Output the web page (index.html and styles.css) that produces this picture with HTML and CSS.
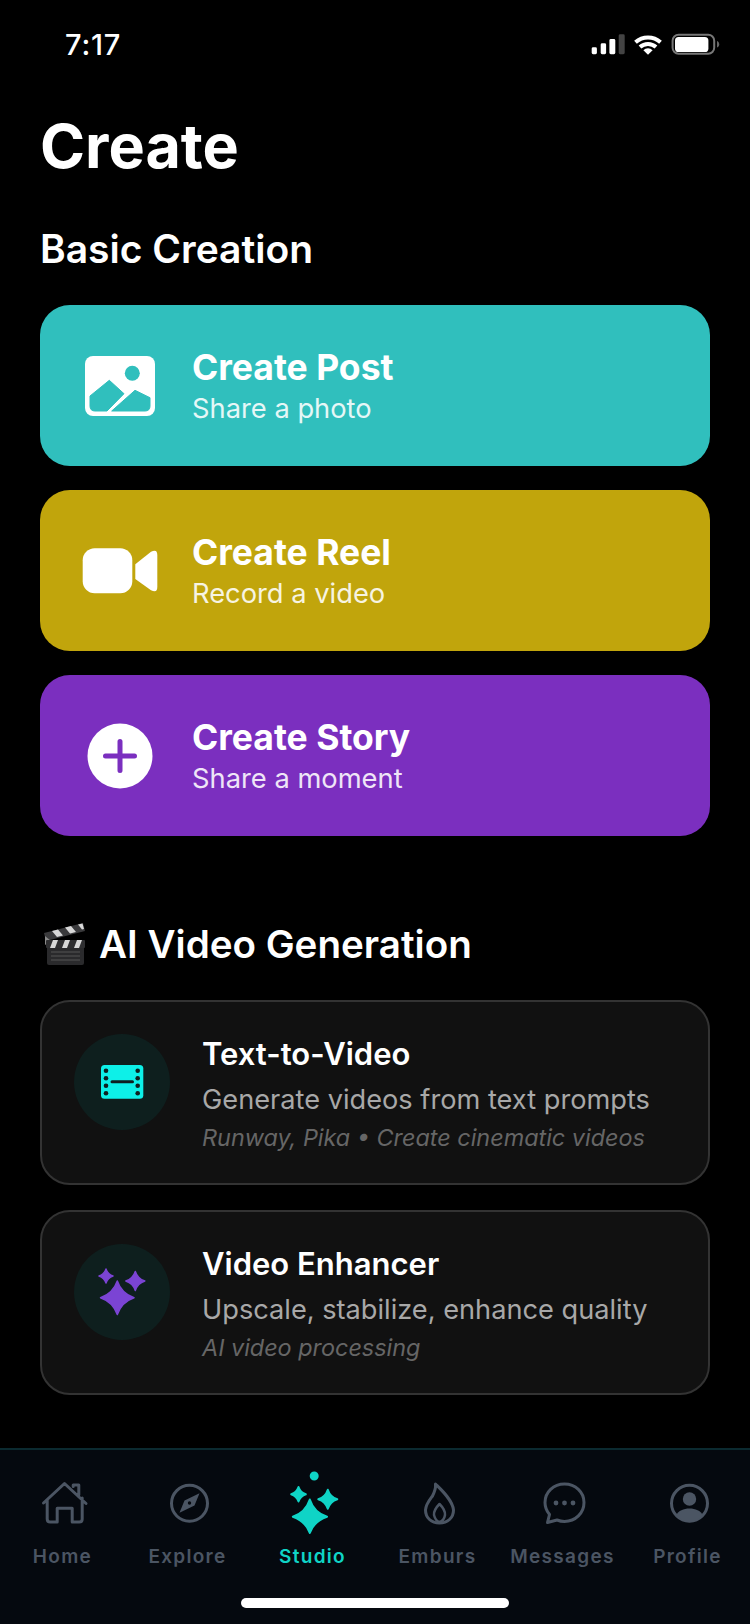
FILE: index.html
```html
<!DOCTYPE html>
<html lang="en">
<head>
<meta charset="utf-8">
<title>Create</title>
<link rel="stylesheet" href="styles.css">
</head>
<body>
<div class="phone">
  <header class="status">
    <span class="time">7:17</span>
    <svg class="status-icons" width="130" height="24" viewBox="590 32 130 24">
      <rect class="s-on" x="591.7" y="47.3" width="5.2" height="6.9" rx="1.4"/>
      <rect class="s-on" x="600.7" y="43.3" width="5.4" height="10.9" rx="1.4"/>
      <rect class="s-on" x="609.4" y="39" width="5.9" height="15.2" rx="1.4"/>
      <rect class="s-off" x="618.7" y="34.3" width="6" height="19.9" rx="1.4"/>
      <path class="s-wifi" d="M635.5 42.3a18.5 18.5 0 0 1 25 0M640 47a12 12 0 0 1 16 0"/>
      <path class="s-on" d="M648 54.8l-4.6-4.6a6.6 6.6 0 0 1 9.2 0z"/>
      <rect class="s-bat" x="672.6" y="34.8" width="41.6" height="19" rx="6"/>
      <rect class="s-on" x="675" y="37" width="33.4" height="15" rx="3.6"/>
      <path class="s-nub" d="M717 41c1.500.4 2.200 1.700 2.200 3.300s-.7 2.900-2.200 3.300z"/>
    </svg>
  </header>

  <main class="content">
    <h1 class="page-title">Create</h1>

    <section class="basic">
      <h2 class="section-title">Basic Creation</h2>
      <div class="quick-list">
        <a class="quick teal">
          <span class="quick-icon">
            <svg width="80" height="64" viewBox="0 0 80 64">
              <rect class="i-white" x="5" y="2" width="70" height="60" rx="8"/>
              <circle class="i-teal" cx="52.300" cy="19.300" r="7.500"/>
              <path class="i-teal i-round" d="M10 42 29.300 26.300 44 39.700 27 57H15q-5 0-5-5zM31.700 57 55 36.300 70 43.700V52q0 5-5 5z"/>
            </svg>
          </span>
          <span class="quick-text">
            <span class="quick-title">Create Post</span>
            <span class="quick-sub">Share a photo</span>
          </span>
        </a>
        <a class="quick gold">
          <span class="quick-icon">
            <svg width="80" height="50" viewBox="0 0 80 50">
              <rect class="i-white" x="2.700" y="2.300" width="49.600" height="45" rx="12"/>
              <path class="i-white" d="M55.300 18.300 71 5.800Q77.300 2.500 77.300 9V41q0 6.500-6.300 3.200L55.300 33z"/>
            </svg>
          </span>
          <span class="quick-text">
            <span class="quick-title">Create Reel</span>
            <span class="quick-sub">Record a video</span>
          </span>
        </a>
        <a class="quick purple">
          <span class="quick-icon">
            <svg width="66" height="66" viewBox="0 0 66 66">
              <circle class="i-white" cx="33" cy="33" r="32.500"/>
              <path class="i-plus" d="M33 18.500V47.500M18.500 33H47.500"/>
            </svg>
          </span>
          <span class="quick-text">
            <span class="quick-title">Create Story</span>
            <span class="quick-sub">Share a moment</span>
          </span>
        </a>
      </div>
    </section>

    <section class="ai">
      <h2 class="section-title ai-title">
        <svg class="clapper" width="44" height="44" viewBox="0 0 44 44">
          <path class="c-top" d="M2 11 41 1l2 8L4 19z"/>
          <path class="c-stripe" d="M10 9l5 6 6-1.500-5-6zM23 5.500l5 6 6-1.500-5-6zM36 2.500l4 5 2-.5-1.500-5.500z"/>
          <path class="c-hinge" d="M3 14l6 5-6 4z"/>
          <rect class="c-body" x="5" y="22" width="37" height="21" rx="2"/>
          <rect class="c-band" x="4" y="18" width="39" height="8" rx="1"/>
          <path class="c-stripe" d="M11 18l-3 8h5l3-8zM23 18l-3 8h5l3-8zM35 18l-3 8h5l3-8z"/>
          <path class="c-lines" d="M9 30H38M9 34H38M9 38H38"/>
        </svg>
        <span>AI Video Generation</span>
      </h2>
      <div class="tool-list">
        <a class="tool">
          <span class="tool-icon">
            <svg width="96" height="96" viewBox="0 0 96 96">
              <rect class="i-cyan" x="27" y="31" width="42.300" height="33.700" rx="3.500"/>
              <g class="i-hole">
                <circle cx="32" cy="36.700" r="2.300"/><circle cx="32" cy="44.300" r="2.300"/><circle cx="32" cy="51.700" r="2.300"/><circle cx="32" cy="59.300" r="2.300"/>
                <circle cx="63.700" cy="36.700" r="2.300"/><circle cx="63.700" cy="44.300" r="2.300"/><circle cx="63.700" cy="51.700" r="2.300"/><circle cx="63.700" cy="59.300" r="2.300"/>
              </g>
              <path class="i-bar" d="M38 47.700H58.500"/>
            </svg>
          </span>
          <span class="tool-text">
            <span class="tool-title">Text-to-Video</span>
            <span class="tool-sub">Generate videos from text prompts</span>
            <span class="tool-tag">Runway, Pika • Create cinematic videos</span>
          </span>
        </a>
        <a class="tool">
          <span class="tool-icon">
            <svg width="96" height="96" viewBox="0 0 96 96">
              <g class="i-violet">
                <path d="M43.300 37Q47.500 49.500 60 53.700 47.500 58 43.300 70.500 39 58 26.500 53.700 39 49.500 43.300 37z"/>
                <path d="M32 25Q33.700 30.300 39 32 33.700 33.700 32 39 30.300 33.700 25 32 30.300 30.300 32 25z"/>
                <path d="M61.300 27.500Q63.600 34.700 70.800 37 63.600 39.300 61.300 46.500 59 39.300 51.800 37 59 34.700 61.300 27.500z"/>
              </g>
            </svg>
          </span>
          <span class="tool-text">
            <span class="tool-title">Video Enhancer</span>
            <span class="tool-sub">Upscale, stabilize, enhance quality</span>
            <span class="tool-tag">AI video processing</span>
          </span>
        </a>
      </div>
    </section>
  </main>

  <nav class="tabs">
    <a class="tab">
      <svg class="tab-icon" width="64" height="66" viewBox="30.500 30 64 66">
        <path class="t-line" d="M43 63 64 43.500 85.500 63.500M72.700 46.500V45H78.300V55M46.700 60V79q0 3 3 3H56.700V68.300H71.700V82H78.700q3 0 3-3V58"/>
      </svg>
      <span class="tab-label">Home</span>
    </a>
    <a class="tab">
      <svg class="tab-icon" width="64" height="66" viewBox="155.500 30 64 66">
        <circle class="t-line" cx="189" cy="63.300" r="18"/>
        <path class="t-fill" d="M199 53.300 194 65.500 179 72.700 184 60.500z"/>
        <circle class="t-bg" cx="189" cy="63" r="1.700"/>
      </svg>
      <span class="tab-label">Explore</span>
    </a>
    <a class="tab active">
      <svg class="tab-icon" width="64" height="66" viewBox="280.500 30 64 66">
        <g class="t-active">
          <circle cx="313.700" cy="36" r="3.500"/>
          <path d="M309.300 59.500Q313.500 72.500 326.500 76.700 313.500 81 309.300 93 305 81 292.300 76.700 305 72.500 309.300 59.500z"/>
          <path d="M298 47Q299.900 52.400 305.300 54.300 299.900 56.200 298 61.500 296.100 56.200 290.700 54.300 296.100 52.400 298 47z"/>
          <path d="M327.300 49.800Q329.600 57 336.800 59.300 329.600 61.600 327.300 68.800 325 61.600 317.800 59.300 325 57 327.300 49.800z"/>
        </g>
      </svg>
      <span class="tab-label">Studio</span>
    </a>
    <a class="tab">
      <svg class="tab-icon" width="64" height="66" viewBox="30.500 30 64 66">
        <path class="t-line" d="M60 44C66 50 77 60 78 70 78 78 72 83 64 83 56 83 50 78 50 70 50.500 64 54 60 57 56 59 52 60.500 48 60 44z"/>
        <path class="t-line t-thin" d="M64 64Q58 70 58.500 75 60 81 64 82 68.500 81 69.500 75 70 70 64 64z"/>
      </svg>
      <span class="tab-label">Emburs</span>
    </a>
    <a class="tab">
      <svg class="tab-icon" width="64" height="66" viewBox="155.500 30 64 66">
        <path class="t-line" d="M189 44C178 44 169.500 52 169.500 62.500 169.500 67.500 171.500 71.500 174 74.500L172 82.500 181.500 80C184 81 186.500 81.500 189 81.500 200 81.500 208.500 73 208.500 62.500 208.500 52 200 44 189 44z"/>
        <circle class="t-fill" cx="180.500" cy="63" r="2.400"/>
        <circle class="t-fill" cx="189" cy="63" r="2.400"/>
        <circle class="t-fill" cx="197.500" cy="63" r="2.400"/>
      </svg>
      <span class="tab-label">Messages</span>
    </a>
    <a class="tab">
      <svg class="tab-icon" width="64" height="66" viewBox="280.500 30 64 66">
        <circle class="t-line" cx="314" cy="63.300" r="18"/>
        <circle class="t-fill" cx="314" cy="59" r="6.700"/>
        <path class="t-fill" d="M300.500 75.500C303 70.500 308 68.500 314 68.500S325 70.500 327.500 75.500C324 79.500 319.500 81.500 314 81.500S304 79.500 300.500 75.500z"/>
      </svg>
      <span class="tab-label">Profile</span>
    </a>
    <span class="home-bar"></span>
  </nav>
</div>
</body>
</html>
```
FILE: styles.css
```css
* { box-sizing: border-box; }
html, body { margin: 0; padding: 0; background: #000; }
body { font-family: Inter, "Liberation Sans", sans-serif; color: #fff; }
svg { display: block; }
.phone { width: 750px; height: 1624px; display: flex; flex-direction: column; overflow: hidden; background: #000; }

.status { height: 88px; flex: none; display: flex; justify-content: space-between; padding: 32px 30px 0 65px; }
.time { font-size: 29px; line-height: 26px; font-weight: 500; letter-spacing: .8px; }
.status-icons { margin-top: 0; }
.s-on { fill: #fff; }
.s-off { fill: #444; }
.s-wifi { fill: none; stroke: #fff; stroke-width: 4px; }
.s-bat { fill: none; stroke: #777; stroke-width: 2px; }
.s-nub { fill: #666; }

.content { flex: 1; padding: 0 40px; }
.page-title { margin: 24px 0 0; font-size: 61px; line-height: 68px; font-weight: 700; }
.section-title { margin: 0; font-size: 39px; line-height: 44px; font-weight: 600; }
.basic { margin-top: 47px; }
.quick-list { display: flex; flex-direction: column; gap: 24px; margin-top: 34px; }
.quick { height: 161px; border-radius: 30px; display: flex; align-items: center; padding: 0 0 0 40px; gap: 32px; color: #fff; }
.teal { background: #30bfbd; }
.gold { background: #c1a50c; }
.purple { background: #7b2fbf; }
.quick-icon { width: 80px; display: flex; justify-content: center; flex: none; }
.quick-text { display: flex; flex-direction: column; padding-top: 4px; }
.quick-title { font-size: 35.500px; line-height: 42px; font-weight: 700; }
.quick-sub { font-size: 27.300px; line-height: 40px; opacity: .88; }

.i-white { fill: #fff; }
.i-teal { fill: #30bfbd; }
.i-round { stroke: #30bfbd; stroke-width: 1px; stroke-linejoin: round; }
.i-plus { fill: none; stroke: #7b2fbf; stroke-width: 5px; stroke-linecap: round; }
.i-cyan { fill: #0df0e8; }
.i-hole { fill: #0e2020; }
.i-bar { stroke: #0e2020; stroke-width: 3px; stroke-linecap: round; fill: none; }
.i-violet { fill: #7b44d4; stroke: #7b44d4; stroke-width: 1.500px; stroke-linejoin: round; }

.ai { margin-top: 86px; }
.ai-title { display: flex; align-items: center; gap: 13px; height: 44px; font-size: 38.600px; }
.clapper { flex: none; margin-left: 2px; }
.c-top { fill: #3a3a3c; }
.c-stripe { fill: #d8d8d8; }
.c-hinge { fill: #8a8a8a; }
.c-body { fill: #2a2a2c; }
.c-band { fill: #2f2f31; }
.c-lines { stroke: #555; stroke-width: 1px; fill: none; }

.tool-list { display: flex; flex-direction: column; gap: 25px; margin-top: 34px; }
.tool { height: 185px; background: #111; border: 2px solid #333; border-radius: 30px; padding: 32px 24px 0 32px; display: flex; align-items: flex-start; gap: 32px; }
.tool-icon { width: 96px; height: 96px; border-radius: 50%; background: #0e1f1e; flex: none; }
.tool-text { display: flex; flex-direction: column; }
.tool-title { font-size: 31px; line-height: 40px; font-weight: 600; color: #fff; margin-bottom: 6px; }
.tool-sub { font-size: 27.200px; line-height: 40px; color: #a8a8a8; }
.tool-tag { font-size: 23.400px; line-height: 36px; font-style: italic; color: #666; }

.tabs { position: relative; height: 176px; flex: none; background: #05090f; border-top: 2px solid #0b2a30; padding-top: 20px; display: grid; grid-template-columns: repeat(6, 125px); align-content: start; }
.tab { display: flex; flex-direction: column; align-items: center; }
.tab-label { font-size: 19px; line-height: 24px; font-weight: 600; letter-spacing: 1.300px; color: #4b5563; margin-top: 9px; }
.active .tab-label { color: #0fd4c6; }
.t-line { fill: none; stroke: #4b5563; stroke-width: 3px; stroke-linecap: round; stroke-linejoin: round; }
.t-thin { stroke-width: 2.500px; }
.t-fill { fill: #4b5563; }
.t-bg { fill: #05090f; }
.t-active { fill: #0fd4c6; stroke: #0fd4c6; stroke-width: 2px; stroke-linejoin: round; }
.home-bar { position: absolute; left: 241px; top: 148px; width: 268px; height: 10px; border-radius: 5px; background: #fff; }
```
